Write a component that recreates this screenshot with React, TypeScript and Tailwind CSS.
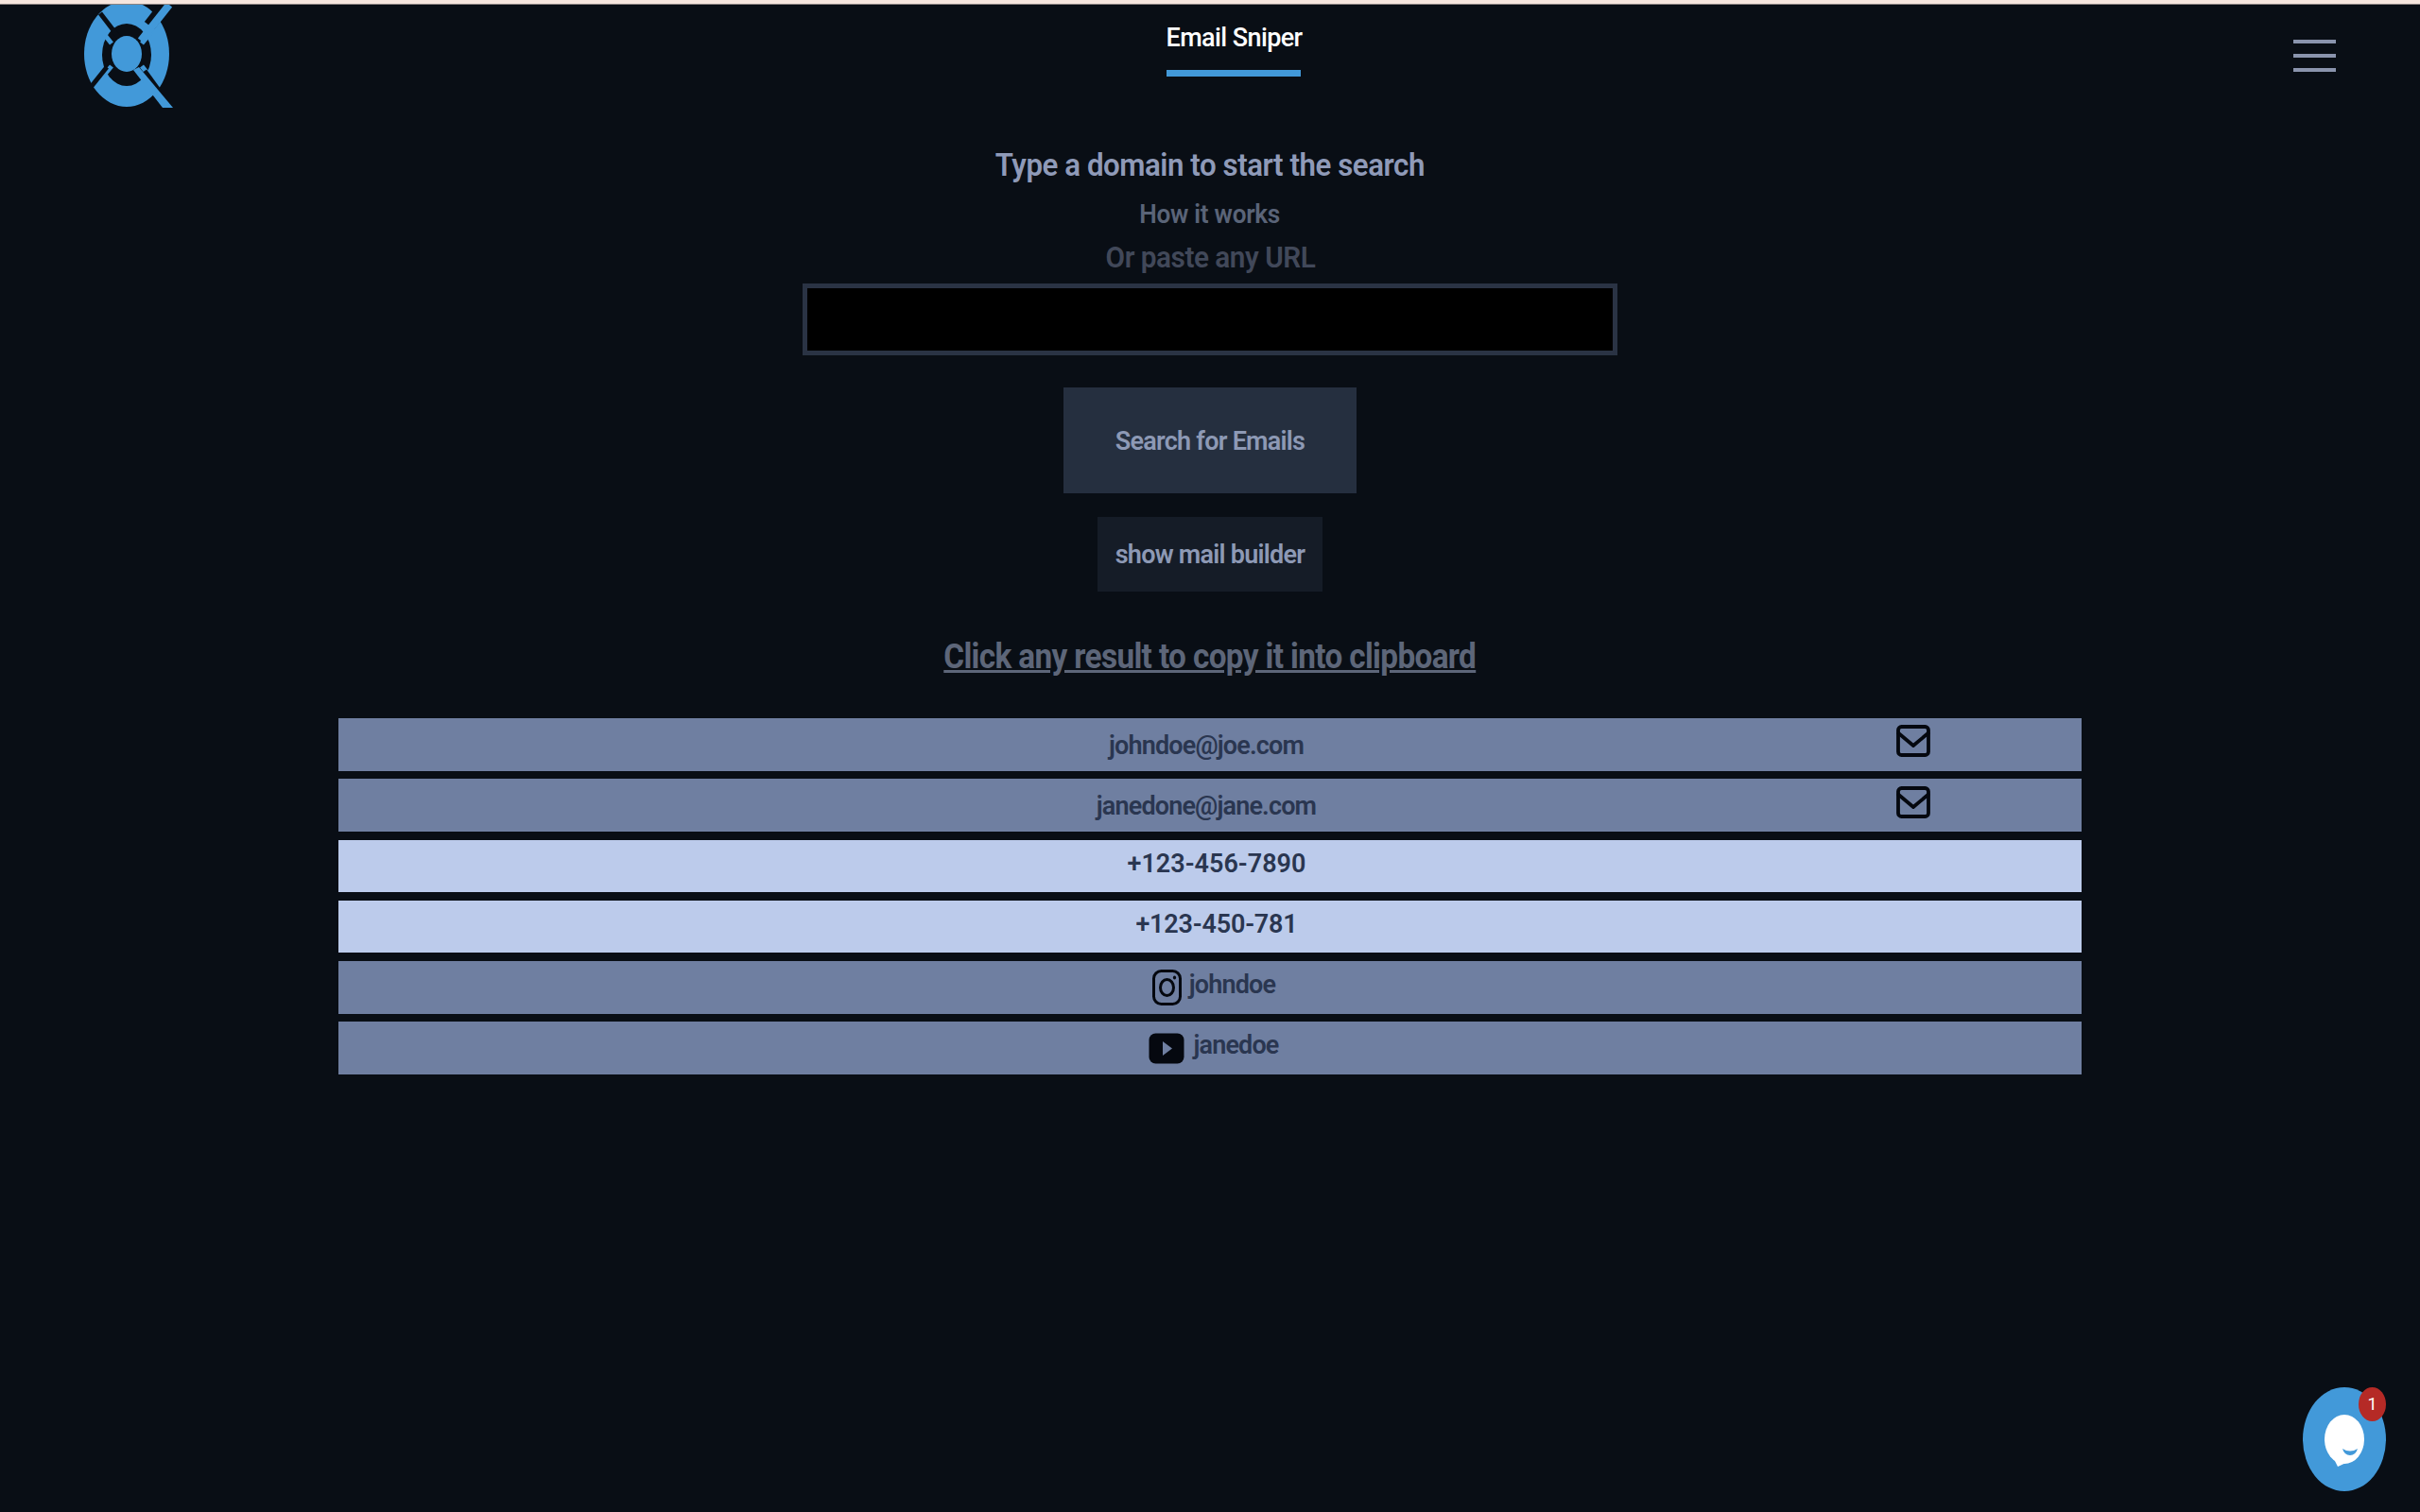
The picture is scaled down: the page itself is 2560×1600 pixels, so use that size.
import React from "react";

const font = { fontFamily: "Roboto, sans-serif" };

function Logo() {
  return (
    <svg width="96" height="110" viewBox="89 5 96 110" className="block">
      <ellipse cx="134" cy="57" rx="45" ry="56" fill="#4299d9" />
      <ellipse cx="134" cy="58" rx="26" ry="33" fill="#090e15" />
      <ellipse cx="134" cy="57" rx="16" ry="19" fill="#4299d9" />
      <path d="M118 46 L110 36 M150 46 L160 34 M118 70 L108 82 M150 70 L158 80" stroke="#4299d9" strokeWidth="5" />
      <path d="M106 14 L126 40" stroke="#090e15" strokeWidth="5" />
      <path d="M113 71 L97 91" stroke="#090e15" strokeWidth="5" />
      <path d="M158 27 L172 9" stroke="#090e15" strokeWidth="13" />
      <path d="M149 43 L179 5" stroke="#4299d9" strokeWidth="8" />
      <path d="M153 75 L169 97" stroke="#090e15" strokeWidth="5" />
      <path d="M141 74 L147 71 L183 114 L172 114 Z" fill="#4299d9" />
    </svg>
  );
}

function Mail() {
  return (
    <svg width="36" height="34" viewBox="0 0 36 34" fill="none" stroke="#05080f" strokeWidth="3.8" strokeLinecap="round" strokeLinejoin="round">
      <rect x="2" y="2" width="32" height="30" rx="3.5" />
      <path d="M2.5 9 L18 22 L33.5 9" />
    </svg>
  );
}

function Instagram() {
  return (
    <svg width="31" height="38" viewBox="0 0 31 38" fill="none" stroke="#05080f" strokeWidth="3">
      <rect x="1.5" y="1.5" width="28" height="35" rx="8" />
      <ellipse cx="15.5" cy="19" rx="7" ry="8.5" />
      <ellipse cx="23.5" cy="8.5" rx="1.6" ry="1.9" fill="#05080f" stroke="none" />
    </svg>
  );
}

function Youtube() {
  return (
    <svg width="38" height="33" viewBox="0 0 38 33">
      <rect x="0.5" y="0.5" width="37" height="32" rx="7" fill="#05080f" />
      <path d="M15 9 L25 16.5 L15 24 Z" fill="#6f7fa1" />
    </svg>
  );
}

function Row({ light, children }: { light?: boolean; children: React.ReactNode }) {
  return (
    <div
      className={`grid h-[55.5px] items-center text-[27px] font-semibold text-[#2a3650] ${light ? "bg-[#bccbeb] text-[#1f2a40]" : "bg-[#6f7fa1]"}`}
    >
      {children}
    </div>
  );
}

function EmailRow({ text }: { text: string }) {
  return (
    <Row>
      <span className="col-start-1 row-start-1 justify-self-center pr-[8px] pt-[3px] leading-none tracking-[-0.85px]">{text}</span>
      <span className="col-start-1 row-start-1 justify-self-end mr-[160px] mb-[7px]">
        <Mail />
      </span>
    </Row>
  );
}

export default function App() {
  return (
    <div className="min-h-[1600px] bg-[#090e15] overflow-hidden relative" style={font}>
      <div className="h-[5px] bg-[#f6e6de] border-b border-[#8a8280]" />
      <header className="flex justify-between items-start px-[89px] h-[110px]">
        <Logo />
        <div className="w-[142px] mr-[2px]">
          <div className="text-[27px] font-medium leading-none tracking-[-0.6px] text-white whitespace-nowrap mt-[22px] text-center">Email Sniper</div>
          <div className="h-[7px] bg-[#4299d9] mt-[20px]" />
        </div>
        <button className="flex flex-col gap-[11px] mt-[37px] w-[45px]">
          <span className="block h-[4px] bg-[#8a94ad]" />
          <span className="block h-[4px] bg-[#8a94ad]" />
          <span className="block h-[4px] bg-[#8a94ad]" />
        </button>
      </header>

      <main className="flex flex-col items-center">
        <h1 className="mt-[41px] text-[34px] leading-[36px] font-semibold tracking-[-0.5px] scale-x-[0.92] text-[#8f9ab8]">Type a domain to start the search</h1>
        <p className="mt-[17px] text-[27px] leading-[36px] font-semibold tracking-[-0.3px] scale-x-[0.97] text-[#5a6478]">How it works</p>
        <p className="mt-[10px] text-[31px] leading-[36px] font-semibold tracking-[-0.5px] scale-x-[0.96] text-[#414859]">Or paste any URL</p>
        <div className="mt-[9px] w-[862px] h-[76px] border-[5px] border-[#2a3344] bg-black" />
        <button className="mt-[34px] w-[310px] h-[112px] pt-[2px] bg-[#252f3f] text-[27px] font-semibold tracking-[-0.75px] text-[#8d99b5]">Search for Emails</button>
        <button className="mt-[25px] w-[238px] h-[79px] pt-[2px] bg-[#151c27] text-[27px] font-semibold tracking-[-0.75px] text-[#8d99b5]">show mail builder</button>
        <p className="mt-[46px] text-[37px] leading-[46px] font-bold underline tracking-[-0.7px] scale-x-[0.9] text-[#5d6679]">Click any result to copy it into clipboard</p>

        <div className="mt-[42px] w-[1844px] flex flex-col gap-[8.8px]">
          <EmailRow text="johndoe@joe.com" />
          <EmailRow text="janedone@jane.com" />
          <Row light>
            <span className="justify-self-center pl-[14px] mb-[5px]">+123-456-7890</span>
          </Row>
          <Row light>
            <span className="justify-self-center pl-[14px] mb-[5px] tracking-[-0.2px]">+123-450-781</span>
          </Row>
          <Row>
            <span className="flex items-center justify-center gap-[8px] pl-[8px]">
              <Instagram />
              <span className="mb-[5px] tracking-[-0.85px]">johndoe</span>
            </span>
          </Row>
          <Row>
            <span className="flex items-center justify-center gap-[9px] pl-[8px]">
              <Youtube />
              <span className="mb-[5px] tracking-[-0.85px]">janedoe</span>
            </span>
          </Row>
        </div>
      </main>

      <div className="absolute left-[2436px] top-[1468px] w-[88px] h-[110px]">
        <svg width="88" height="110" viewBox="0 0 88 110" className="block">
          <ellipse cx="44" cy="55" rx="44" ry="55" fill="#4299d9" />
          <ellipse cx="44" cy="55" rx="21" ry="26" fill="#fff" />
          <path d="M33 76 L37 84 L50 78 Z" fill="#fff" />
          <path d="M42 65 Q50 70 58 65 Q56 72 50 72 Q44 72 42 65 Z" fill="#4299d9" />
        </svg>
        <div className="absolute right-0 top-0 w-[29px] h-[36px] rounded-[50%] bg-[#b52a26] flex items-center justify-center text-[18px] leading-none text-white">1</div>
      </div>
    </div>
  );
}
